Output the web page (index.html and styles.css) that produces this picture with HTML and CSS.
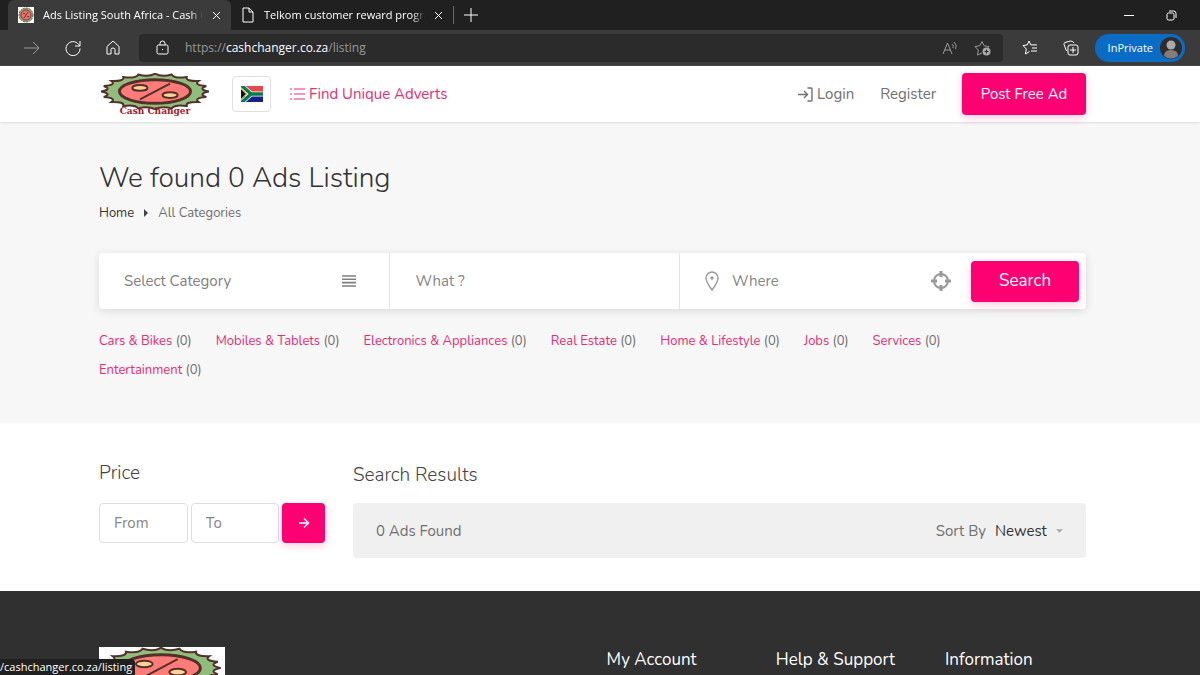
FILE: index.html
```html
<!DOCTYPE html>
<html lang="en" dir="ltr">
<head>
	<title>Ads Listing South Africa - Cash Changer</title>
	<meta charset="utf-8">
	<meta name="viewport" content="width=device-width,initial-scale=1">
	<link rel="stylesheet" href="styles.css">
</head>
<body>
	<svg class="defs" width="0" height="0" aria-hidden="true">
		<symbol id="seal" viewBox="-52 -52 104 104" preserveAspectRatio="none">
			<path class="seal-edge" d="M50 0Q39.5 6.3 47.6 15.5Q35.6 18.2 40.5 29.4Q28.3 28.3 29.4 40.5Q18.2 35.6 15.5 47.6Q6.3 39.5 0 50Q-6.3 39.5-15.5 47.6Q-18.2 35.6-29.4 40.5Q-28.3 28.3-40.5 29.4Q-35.6 18.2-47.6 15.5Q-39.5 6.3-50 0Q-39.5-6.3-47.6-15.5Q-35.6-18.2-40.5-29.4Q-28.3-28.3-29.4-40.5Q-18.2-35.6-15.5-47.6Q-6.3-39.5 0-50Q6.3-39.5 15.5-47.6Q18.2-35.6 29.4-40.5Q28.3-28.3 40.5-29.4Q35.6-18.2 47.6-15.5Q39.5-6.3 50 0Z"/>
			<circle class="seal-face" r="33"/>
			<ellipse class="seal-dot" cx="-14" cy="-10" rx="7" ry="8"/>
			<ellipse class="seal-dot" cx="14" cy="10" rx="7" ry="8"/>
			<path class="seal-slash" d="M14-22L-14 22"/>
		</symbol>
	</svg>
	<div class="browser">
		<div class="tabs">
			<div class="tab active">
				<svg class="favicon" width="16" height="16" viewBox="0 0 16 16"><path fill="#fff" d="M0 0h16v16H0z"/><circle cx="8" cy="8" r="7" fill="#91a878" stroke="#6d4a3c" stroke-dasharray="2 1"/><circle cx="8" cy="8" r="5" fill="#f0706c" stroke="#7a4038"/><path stroke="#6b352f" d="M10 5l-4 6M5 6.500h2M9 9.500h2"/></svg>
				<span class="tab-title">Ads Listing South Africa - Cash Changer</span>
				<button class="icon-btn" aria-label="Close tab"><svg width="9" height="9" viewBox="0 0 9 9"><path d="M1 1l7 7M8 1L1 8"/></svg></button>
			</div>
			<div class="tab">
				<svg width="14" height="16" viewBox="0 0 14 16"><path d="M2 1h6l4 4v10H2zM8 1v4h4"/></svg>
				<span class="tab-title">Telkom customer reward programme</span>
				<button class="icon-btn" aria-label="Close tab"><svg width="9" height="9" viewBox="0 0 9 9"><path d="M1 1l7 7M8 1L1 8"/></svg></button>
			</div>
			<button class="icon-btn new-tab" aria-label="New tab"><svg width="14" height="14" viewBox="0 0 14 14"><path d="M7 0v14M0 7h14"/></svg></button>
			<div class="window-btns">
				<button class="icon-btn" aria-label="Minimize"><svg width="10" height="10" viewBox="0 0 10 10"><path d="M0 5.500h10"/></svg></button>
				<button class="icon-btn" aria-label="Restore"><svg width="11" height="11" viewBox="0 0 11 11"><rect x="1" y="3" width="7" height="7" rx="1.5"/><path d="M3 1h4.500q2.500 0 2.500 2.500V8"/></svg></button>
			</div>
		</div>
		<div class="toolbar">
			<button class="icon-btn dim" aria-label="Forward"><svg width="16" height="14" viewBox="0 0 16 14"><path d="M0 7h15M9 1l6 6-6 6"/></svg></button>
			<button class="icon-btn" aria-label="Refresh"><svg width="16" height="16" viewBox="0 0 16 16"><path d="M14.500 6A7 7 0 1 0 15 8.500M15 1v5h-5"/></svg></button>
			<button class="icon-btn" aria-label="Home"><svg width="14" height="15" viewBox="0 0 14 15"><path d="M1 6.500L7 1l6 5.500V14H9V9.500q0-1.500-2-1.500t-2 1.500V14H1z"/></svg></button>
			<div class="address">
				<svg width="13" height="15" viewBox="0 0 13 15"><rect x="1" y="5" width="11" height="9" rx="1.500"/><path d="M4 5V3.500a2.500 2.500 0 0 1 5 0V5M6 9.500h1"/></svg>
				<span class="url">https://<b>cashchanger.co.za</b>/listing</span>
				<button class="icon-btn dim" aria-label="Read aloud"><svg width="16" height="14" viewBox="0 0 16 14"><path d="M1 13L5.500 2 10 13M2.500 9h6M10 3q2 1.500 1 4M12 1q3.500 3 1.500 7"/></svg></button>
				<button class="icon-btn dim" aria-label="Add to favorites"><svg width="17" height="16" viewBox="0 0 17 16"><path d="M8 13l-4.500 2 .8-5L1 6.500l4.700-.7L8 1.500l2.200 4.300 4.800.7-1.500 1.500"/><circle cx="12.500" cy="11.500" r="4" fill="#aaa" stroke="none"/><path d="M12.500 9.500v4M10.500 11.500h4" stroke="#2b2b2b"/></svg></button>
			</div>
			<button class="icon-btn" aria-label="Favorites"><svg width="16" height="15" viewBox="0 0 16 15"><path d="M7.500 11.500L3.500 14l.8-5L1 5.500l4.300-.6L7 1l1.800 3.900H15M10 8h5M9 11h6"/></svg></button>
			<button class="icon-btn" aria-label="Collections"><svg width="16" height="16" viewBox="0 0 16 16"><rect x="5" y="5" width="10" height="10" rx="2"/><path d="M10 7v6M7 10h6M3.500 11L1 4.500Q.7 3 2 2.500L7.500 1Q10 1 11 3"/></svg></button>
			<button class="inprivate">InPrivate
				<svg width="22" height="22" viewBox="0 0 22 22" stroke="none"><circle cx="11" cy="11" r="11" fill="#302c2a"/><circle cx="11" cy="8" r="4.500" fill="#aaa"/><path d="M4 19q0-6 7-6t7 6q-7 5-14 0z" fill="#837d79"/></svg>
			</button>
		</div>
		<div class="page">
			<header class="site-header wrap">
				<a class="logo" href="#" aria-label="Cash Changer">
					<svg width="114" height="46" viewBox="0 0 114 46">
						<use href="#seal" width="112" height="37" y="2"/>
						<text x="56" y="43" text-anchor="middle">Cash Changer</text>
					</svg>
				</a>
				<button class="flag" aria-label="South Africa">
					<svg width="22" height="16" viewBox="0 0 22 16" stroke="none">
						<path fill="#e8484b" d="M0 0h22v6H0z"/><path fill="#16218a" d="M0 10h22v6H0z"/>
						<path stroke="#fff" stroke-width="5" d="M0-1l10 9L0 17M10 8h12"/>
						<path stroke="#087a4b" stroke-width="3.500" d="M0-1l10 9L0 17M10 8h12"/>
						<path fill="#111" stroke="#efb431" d="M-1 2l6.500 6L-1 14z"/>
					</svg>
				</button>
				<a class="adverts" href="#">
					<svg width="15" height="12" viewBox="0 0 15 12"><path d="M4 1h11M4 6h11M4 11h11M0 1h2M0 6h2M0 11h2"/></svg>
					Find Unique Adverts
				</a>
				<nav class="account">
					<a href="#"><svg width="15" height="15" viewBox="0 0 15 15" stroke-width="1.400"><path d="M0 7.500h9M6 4l3.500 3.500L6 11M9.500 1H13q1 0 1 1v11q0 1-1 1H9.500"/></svg>Login</a>
					<a href="#">Register</a>
					<a class="btn post" href="#">Post Free Ad</a>
				</nav>
			</header>
			<section class="hero wrap">
				<h1>We found 0 Ads Listing</h1>
				<nav class="crumbs">
					<a href="#">Home</a>
					<svg width="4" height="8" viewBox="0 0 4 8"><path d="M0 0l4 4-4 4z"/></svg>
					<span>All Categories</span>
				</nav>
				<form class="search">
					<button type="button" class="field category">
						Select Category
						<svg width="14" height="12" viewBox="0 0 14 12" stroke-width="1.600"><path d="M0 1h14M0 4.300h14M0 7.600h14M0 11h14"/></svg>
					</button>
					<div class="field"><input type="text" placeholder="What ?" aria-label="What"></div>
					<div class="field where">
						<svg width="14" height="20" viewBox="0 0 14 20" stroke-width="1.400"><path d="M7 19Q1 11 1 7a6 6 0 0 1 12 0q0 4-6 12z"/><circle cx="7" cy="7" r="1"/></svg>
						<input type="text" placeholder="Where" aria-label="Where">
						<button type="button" class="locate" aria-label="Use my location"><svg width="20" height="20" viewBox="0 0 20 20"><circle cx="10" cy="10" r="7"/><path d="M10 0v6M10 14v6M0 10h6M14 10h6"/></svg></button>
					</div>
					<button type="button" class="btn submit">Search</button>
				</form>
				<ul class="cats">
					<li><a href="#">Cars &amp; Bikes</a> (0)</li>
					<li><a href="#">Mobiles &amp; Tablets</a> (0)</li>
					<li><a href="#">Electronics &amp; Appliances</a> (0)</li>
					<li><a href="#">Real Estate</a> (0)</li>
					<li><a href="#">Home &amp; Lifestyle</a> (0)</li>
					<li><a href="#">Jobs</a> (0)</li>
					<li><a href="#">Services</a> (0)</li>
					<li><a href="#">Entertainment</a> (0)</li>
				</ul>
			</section>
			<main class="content wrap">
				<aside class="filters">
					<h2>Price</h2>
					<form class="price">
						<input type="text" placeholder="From" aria-label="Price from">
						<input type="text" placeholder="To" aria-label="Price to">
						<button type="button" class="btn" aria-label="Apply"><svg width="12" height="12" viewBox="0 0 12 12" stroke-width="1.600"><path d="M1 6h9M6 1.500L10.500 6 6 10.500"/></svg></button>
					</form>
				</aside>
				<section class="results">
					<h2>Search Results</h2>
					<div class="result-bar">
						<span class="count">0 Ads Found</span>
						<label for="sort">Sort By</label>
						<select id="sort"><option>Newest</option></select>
						<svg width="7" height="4" viewBox="0 0 8 4"><path d="M0 0h8L4 4z"/></svg>
					</div>
				</section>
			</main>
			<footer class="footer wrap">
				<div class="footer-logo">
					<svg width="126" height="56" viewBox="0 0 126 56" aria-hidden="true"><use href="#seal" width="124" height="42"/></svg>
				</div>
				<h3>My Account</h3>
				<h3>Help &amp; Support</h3>
				<h3>Information</h3>
			</footer>
		</div>
		<div class="status">/cashchanger.co.za/listing</div>
	</div>
</body>
</html>
```
FILE: styles.css
```css
* {
	box-sizing: border-box;
}

body {
	color: #707070;
	font: 15px/24px Nunito, Lato, sans-serif;
	margin: 0;
}

a {
	color: inherit;
	text-decoration: none;
}

button, input, select {
	background: none;
	border: 0;
	color: inherit;
	font: inherit;
	margin: 0;
	min-width: 0;
	padding: 0;
}

svg {
	display: block;
	fill: none;
	flex: none;
}

svg:not([stroke]) {
	stroke: currentColor;
}

h1, h2, h3 {
	font-weight: 400;
	margin: 0;
}

.defs {
	position: absolute;
}

/* logo */

.seal-edge, .seal-face, .seal-dot, .seal-slash {
	stroke: #54302b;
	stroke-width: 2px;
	vector-effect: non-scaling-stroke;
}

.seal-edge {
	fill: #91bd7c;
}

.seal-face {
	fill: #ff7c78;
	stroke-width: 3px;
}

.seal-dot {
	fill: #ffd493;
}

.favicon {
	stroke: none;
}

.logo text {
	fill: #a01c2c;
	font: bold 9px "DejaVu Serif", serif;
	stroke: none;
}

/* browser window */

.browser {
	display: flex;
	flex-direction: column;
	height: 100vh;
	overflow: hidden;
	position: relative;
}

.tabs, .toolbar {
	align-items: center;
	color: #fff;
	display: flex;
	flex: none;
	font: 11px/16px "Segoe UI", "Open Sans", sans-serif;
}

.tabs {
	background: #202020;
	height: 30px;
	padding-left: 8px;
}

.tab {
	align-items: center;
	display: flex;
	gap: 9px;
	height: 30px;
	padding: 0 10px;
	width: 223px;
}

.tab.active {
	background: #3b3b3b;
	border-radius: 6px 6px 0 0;
}

.tab + .tab {
	border-right: 1px solid #666;
	height: 18px;
}

.tab-title {
	flex: 1;
	mask-image: linear-gradient(90deg, #000 92%, transparent);
	overflow: hidden;
	white-space: nowrap;
}

.icon-btn {
	display: grid;
	place-items: center;
}

.dim {
	color: #999;
}

.new-tab {
	margin-left: 10px;
}

.window-btns {
	display: flex;
	gap: 32px;
	margin-left: auto;
	padding-right: 23px;
}

.toolbar {
	background: #3b3b3b;
	border-bottom: 1px solid #4a4a4a;
	gap: 25px;
	height: 36px;
	padding: 0 15px 0 24px;
}

.address {
	align-items: center;
	background: #2b2b2b;
	border-radius: 4px;
	display: flex;
	flex: 1;
	font-size: 12px;
	gap: 16px;
	height: 28px;
	margin: 0 -6px;
	padding: 0 12px 0 17px;
}

.url {
	color: #999;
	flex: 1;
}

.url b {
	color: #fff;
	font-weight: 400;
}

.inprivate {
	align-items: center;
	background: #0a6cc4;
	border-radius: 14px;
	display: flex;
	gap: 7px;
	height: 28px;
	margin-left: -9px;
	padding: 0 3px 0 13px;
}

.status {
	background: #202020;
	border-radius: 0 4px 0 0;
	bottom: 0;
	color: #fff;
	font: 11px/16px "Segoe UI", "Open Sans", sans-serif;
	left: 0;
	padding-right: 3px;
	position: absolute;
}

/* page */

.page {
	background: #fff;
	flex: 1;
	overflow: hidden;
}

.wrap {
	padding-left: 99px;
	padding-right: 114px;
}

.btn {
	align-items: center;
	background: #ff0072;
	border-radius: 4px;
	box-shadow: 0 3px 9px rgba(255, 0, 114, .2);
	color: #fff;
	display: flex;
	justify-content: center;
}

.site-header {
	align-items: center;
	box-shadow: 0 0 3px rgba(0, 0, 0, .2);
	display: flex;
	height: 56px;
	position: relative;
}

.flag {
	border: 1px solid #e0e0e0;
	border-radius: 4px;
	display: grid;
	height: 36px;
	margin: 0 19px;
	place-items: center;
	width: 39px;
}

.adverts {
	align-items: center;
	color: #e72c74;
	display: flex;
	gap: 4px;
}

.account {
	align-items: center;
	display: flex;
	gap: 26px;
	margin-left: auto;
}

.account a {
	align-items: center;
	display: flex;
	gap: 4px;
}

.account .post {
	height: 42px;
	justify-content: center;
	width: 124px;
}

.hero {
	background: #f7f7f7;
	height: 301px;
	padding-top: 38px;
}

h1 {
	color: #333;
	font-size: 28px;
	font-weight: 350;
	line-height: 36px;
}

.crumbs {
	align-items: center;
	display: flex;
	font-size: 13px;
	gap: 10px;
	line-height: 20px;
	margin-top: 7px;
}

.crumbs a {
	color: #333;
}

.crumbs path, .result-bar path {
	fill: currentColor;
	stroke: none;
}

.crumbs svg {
	color: #444;
}

.search {
	align-items: center;
	background: #fff;
	border-radius: 4px;
	box-shadow: 0 2px 9px rgba(0, 0, 0, .12);
	display: flex;
	height: 56px;
	margin-top: 30px;
}

.field {
	align-items: center;
	border-right: 1px solid #e4e4e4;
	color: #808080;
	display: flex;
	height: 56px;
	padding: 0 26px;
	width: 29.5%;
}

.category {
	justify-content: space-between;
	padding: 0 33px 0 25px;
}

.field input {
	flex: 1;
}

.where {
	border-right: 0;
	flex: 1;
	gap: 13px;
	padding: 0 20px 0 25px;
}

.where svg {
	color: #999;
}

.locate circle {
	stroke-width: 2px;
}

.locate path {
	stroke-width: 3px;
}

.submit {
	font-size: 17px;
	height: 41px;
	margin-right: 7px;
	width: 108px;
}

::placeholder {
	color: #868686;
	opacity: 1;
}

.cats {
	display: flex;
	flex-wrap: wrap;
	font-size: 13px;
	gap: 5px 24px;
	list-style: none;
	margin: 20px 0 0;
	padding: 0 80px 0 0;
}

.cats a {
	color: #e72c74;
}

.content {
	display: flex;
	gap: 28px;
	height: 168px;
	padding-top: 37px;
}

h2 {
	color: #444;
	font-size: 19px;
	font-weight: 350;
	line-height: 26px;
}

.filters {
	width: 226px;
}

.price {
	display: flex;
	gap: 3px;
	margin-top: 17px;
}

.price input {
	border: 1px solid #dedede;
	border-radius: 4px;
	flex: 1;
	height: 40px;
	padding: 0 14px;
}

.price .btn {
	width: 43px;
}

.results {
	flex: 1;
}

.results h2 {
	padding-top: 2px;
}

.result-bar {
	align-items: center;
	background: #f0f0f0;
	border-radius: 4px;
	display: flex;
	gap: 9px;
	height: 55px;
	margin-top: 15px;
	padding: 0 23px;
}

.count {
	flex: 1;
}

select {
	appearance: none;
}

.result-bar select {
	color: #333;
}

.result-bar svg {
	color: #aaa;
}

.footer {
	background: #303030;
	color: #fff;
	display: grid;
	grid-template-columns: 18fr 6fr 6fr 5fr;
	min-height: 160px;
	padding-top: 56px;
}

.footer-logo {
	background: #fff;
	height: 56px;
	width: 126px;
}

h3 {
	font-size: 17px;
	line-height: 26px;
}
```
